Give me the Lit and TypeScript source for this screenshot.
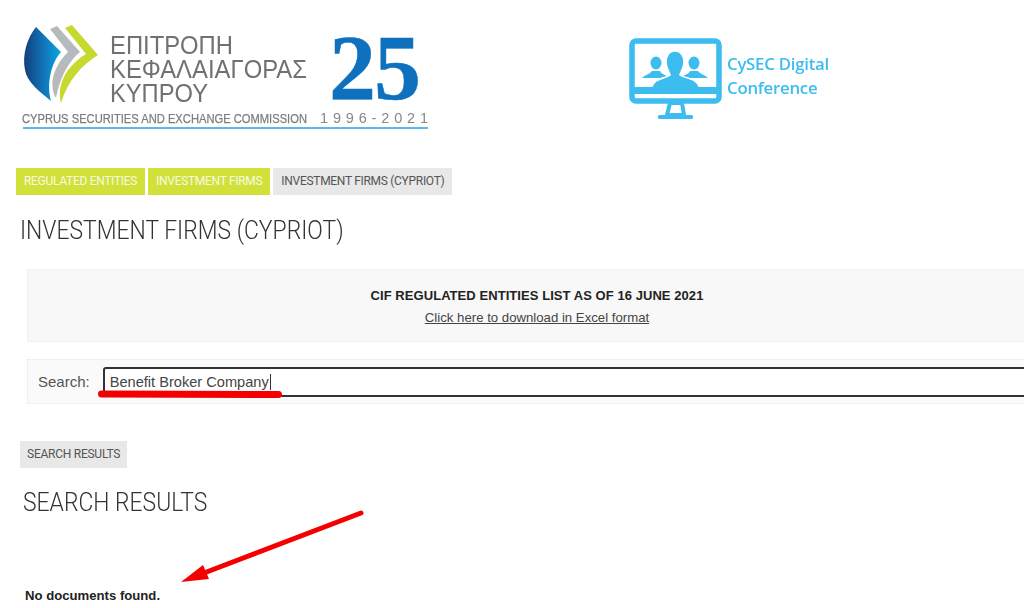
import { LitElement, html, css } from "lit";
import { customElement } from "lit/decorators.js";

@customElement("app-root")
export class AppRoot extends LitElement {
  static styles = css`
    :host {
      display: block;
      position: relative;
      width: 1024px;
      height: 608px;
      overflow: hidden;
      background: #fff;
      font-family: "Liberation Sans", Arial, sans-serif;
    }
    .header {
      display: flex;
      height: 168px;
      align-items: flex-start;
    }
    .logo {
      display: block;
      width: 440px;
      height: 140px;
      flex: none;
      filter: blur(0.35px);
    }
    .conf {
      display: flex;
      align-items: flex-start;
      margin: 37px 0 0 188px;
      gap: 3px;
      color: #3cbcef;
      filter: blur(0.3px);
    }
    .conf svg { display: block; width: 96px; height: 84px; flex: none; }
    .conf-text {
      font-family: "Open Sans", sans-serif;
      font-weight: 600;
      font-size: 16.8px;
      line-height: 24px;
      letter-spacing: -0.25px;
      padding-top: 15px;
      white-space: nowrap;
    }
    .crumbs {
      display: flex;
      gap: 3px;
      margin-left: 16px;
    }
    .tag {
      height: 27px;
      line-height: 27px;
      padding: 0 8px;
      font-family: Roboto, sans-serif;
      font-size: 12px;
      letter-spacing: -0.3px;
      white-space: nowrap;
    }
    .tag.green { background: #d2e03a; color: #f8fbe0; }
    .tag.grey { background: #e8e8e8; color: #555; }
    h1, h2 {
      margin: 0;
      font-family: Roboto, sans-serif;
      font-weight: 300;
      color: #333;
      white-space: nowrap;
      transform: scaleX(0.88);
      transform-origin: left center;
    }
    h1 {
      font-size: 26px;
      line-height: 30px;
      margin: 20px 0 0 20px;
    }
    .notice {
      width: 1100px;
      box-sizing: border-box;
      height: 73px;
      margin: 24px 0 0 27px;
      padding-top: 18px;
      background: #f8f8f8;
      border: 1px solid #f1f1f1;
      text-align: center;
      line-height: 16px;
    }
    .notice-in { width: 1018px; }
    .notice b { display: block; color: #222; height: 21px; font-size: 13px; letter-spacing: 0.06px; }
    .notice a { color: #444; text-decoration: underline; font-size: 13.2px; }
    .search {
      display: flex;
      align-items: center;
      gap: 13px;
      width: 1100px;
      box-sizing: border-box;
      height: 45px;
      margin: 17px 0 0 27px;
      padding-left: 10px;
      background: #fafafa;
      border: 1px dotted #e6e6e6;
      color: #555;
      font-size: 15px;
    }
    .field {
      flex: 1;
      box-sizing: border-box;
      height: 30px;
      line-height: 26px;
      padding-left: 5px;
      background: #fff;
      border: 2px solid #333;
      border-radius: 3px;
      color: #444;
      font-size: 14.6px;
      white-space: nowrap;
    }
    .caret { border-left: 1px solid #333; margin-left: 1px; }
    .results-tag {
      display: inline-block;
      margin: 37px 0 0 20px;
      background: #e8e8e8;
      color: #555;
      padding: 0 7px;
      letter-spacing: -0.25px;
    }
    h2 {
      font-size: 26px;
      line-height: 30px;
      margin: 19px 0 0 23px;
    }
    .none {
      margin: 71px 0 0 25px;
      font-size: 13.15px;
      line-height: 16px;
      font-weight: 700;
      color: #222;
    }
    .marks {
      position: absolute;
      inset: 0;
      width: 1024px;
      height: 608px;
      pointer-events: none;
    }
  `;

  render() {
    return html`
      <div class="header">
        <svg class="logo" viewBox="0 0 440 140">
          <defs>
            <linearGradient id="leaf" x1="0" x2="1" y1="0" y2="0">
              <stop offset="0" stop-color="#123f7c" />
              <stop offset="0.5" stop-color="#1272b5" />
              <stop offset="1" stop-color="#0aa6e4" />
            </linearGradient>
          </defs>
          <path d="M36 27 L61 52 C52 62 46 82 51 101 C40 92 27 82 25 70 C22 55 27 38 36 27 Z" fill="url(#leaf)" />
          <path d="M50 29 L57 26 L80 52 C70 60 60 76 56 98 C50 88 50 70 68 52 Z" fill="#b7babd" />
          <path d="M65 28 L72 25 L98 55 C82 65 68 80 61 103 C58 92 61 80 68 70 C73 64 79 58 86 54 Z" fill="#c6d92f" />
          <g fill="#6f7174" font-family="'Liberation Sans', sans-serif" font-size="25.5">
            <text x="110" y="54" textLength="123" lengthAdjust="spacingAndGlyphs">ΕΠΙΤΡΟΠΗ</text>
            <text x="110" y="78" textLength="197" lengthAdjust="spacingAndGlyphs">ΚΕΦΑΛΑΙΑΓΟΡΑΣ</text>
            <text x="110" y="102" textLength="98" lengthAdjust="spacingAndGlyphs">ΚΥΠΡΟΥ</text>
          </g>
          <text x="22" y="122.5" textLength="285" lengthAdjust="spacingAndGlyphs" fill="#7a7d80" stroke="#7a7d80" stroke-width="0.25" font-family="'Liberation Sans', sans-serif" font-size="12.5">CYPRUS SECURITIES AND EXCHANGE COMMISSION</text>
          <text x="329" y="99" textLength="92" lengthAdjust="spacing" fill="#0f70bd" stroke="#0f70bd" stroke-width="0.5" font-family="'Liberation Serif', serif" font-weight="700" font-size="94">25</text>
          <text x="320" y="122.5" textLength="108" fill="#85888b" font-family="'Liberation Sans', sans-serif" font-size="14.5">1996-2021</text>
          <rect x="23" y="127" width="405" height="2" fill="#5ab9ef" />
        </svg>
        <div class="conf">
          <svg viewBox="0 0 96 84">
            <rect x="4" y="4" width="87" height="60" rx="4" fill="none" stroke="currentColor" stroke-width="5.5" />
            <rect x="3" y="50" width="90" height="7" fill="currentColor" />
            <path d="M42 66 H54 L56 78 H39 Z" fill="none" stroke="currentColor" stroke-width="4" />
            <rect x="30" y="78" width="35" height="4" rx="1.5" fill="currentColor" />
            <g fill="currentColor">
              <ellipse cx="28" cy="26" rx="5.5" ry="6.5" />
              <path d="M14 41 C17 38 22 37 24 34 H32 C33 37 38 38 42 41 Z" />
              <ellipse cx="66" cy="26" rx="5.5" ry="6.5" />
              <path d="M80 41 C77 38 72 37 70 34 H62 C61 37 56 38 52 41 Z" />
              <path
                d="M47 14 C53 14 56 19 56 25 C56 31 53 34 52 38 C54 40 62 41 67 44 C70 46 71 48 72 51 H23 C24 48 25 46 28 44 C33 41 40 40 42 38 C41 34 38 31 38 25 C38 19 41 14 47 14 Z"
                stroke="#fff"
                stroke-width="1.6"
              />
            </g>
            <rect x="6" y="50" width="84" height="7" fill="currentColor" />
          </svg>
          <div class="conf-text">CySEC Digital<br />Conference</div>
        </div>
      </div>

      <div class="crumbs">
        <span class="tag green">REGULATED ENTITIES</span>
        <span class="tag green">INVESTMENT FIRMS</span>
        <span class="tag grey">INVESTMENT FIRMS (CYPRIOT)</span>
      </div>
      <h1>INVESTMENT FIRMS (CYPRIOT)</h1>

      <div class="notice">
        <div class="notice-in">
          <b>CIF REGULATED ENTITIES LIST AS OF 16 JUNE 2021</b>
          <a>Click here to download in Excel format</a>
        </div>
      </div>

      <div class="search">
        <span>Search:</span>
        <div class="field">Benefit Broker Company<span class="caret"></span></div>
      </div>

      <div class="tag results-tag">SEARCH RESULTS</div>
      <h2>SEARCH RESULTS</h2>
      <div class="none">No documents found.</div>

      <svg class="marks" viewBox="0 0 1024 608">
        <path d="M101.5 394 L278.5 394.5" fill="none" stroke="#f50000" stroke-width="7" stroke-linecap="round" />
        <path d="M361 513 L204 573" fill="none" stroke="#f50000" stroke-width="5" stroke-linecap="round" />
        <path d="M181 582 L203 565 L209 579 Z" fill="#f50000" />
      </svg>
    `;
  }
}
